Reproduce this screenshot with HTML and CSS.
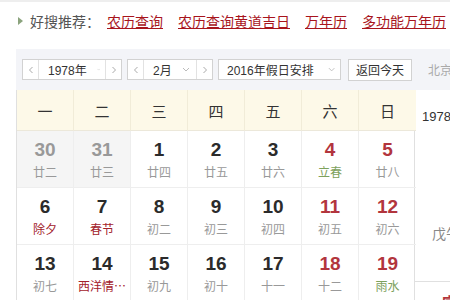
FILE: index.html
```html
<!DOCTYPE html>
<html lang="zh-CN">

<head>
    <meta charset="UTF-8">
    <title>万年历</title>
    <link rel="stylesheet" href="styles.css">
</head>

<body>
    <div class="top-line"></div>
    <div class="recommend">
        <span class="arrow"></span>
        <span class="label">好搜推荐：</span>
        <a href="#">农历查询</a>
        <a href="#">农历查询黄道吉日</a>
        <a href="#">万年历</a>
        <a href="#">多功能万年历</a>
    </div>

    <div class="calendar">
        <div class="toolbar">
            <div class="picker year">
                <span class="step"><svg width="6" height="8" viewBox="0 0 6 8"><polyline points="4.5,1 1.5,4 4.5,7" fill="none" stroke="#aaa" stroke-width="1"/></svg></span>
                <span class="value">1978年<svg class="down" width="8" height="5" viewBox="0 0 8 5"><polyline points="1,1 4,4 7,1" fill="none" stroke="#bbb" stroke-width="1"/></svg></span>
                <span class="step"><svg width="6" height="8" viewBox="0 0 6 8"><polyline points="1.5,1 4.5,4 1.5,7" fill="none" stroke="#aaa" stroke-width="1"/></svg></span>
            </div>
            <div class="picker month">
                <span class="step"><svg width="6" height="8" viewBox="0 0 6 8"><polyline points="4.5,1 1.5,4 4.5,7" fill="none" stroke="#aaa" stroke-width="1"/></svg></span>
                <span class="value">2月<svg class="down" width="8" height="5" viewBox="0 0 8 5"><polyline points="1,1 4,4 7,1" fill="none" stroke="#bbb" stroke-width="1"/></svg></span>
                <span class="step"><svg width="6" height="8" viewBox="0 0 6 8"><polyline points="1.5,1 4.5,4 1.5,7" fill="none" stroke="#aaa" stroke-width="1"/></svg></span>
            </div>
            <div class="picker holiday">
                <span class="value">2016年假日安排<svg class="down" width="8" height="5" viewBox="0 0 8 5"><polyline points="1,1 4,4 7,1" fill="none" stroke="#bbb" stroke-width="1"/></svg></span>
            </div>
            <div class="today-btn">返回今天</div>
            <div class="beijing">北京时间</div>
        </div>

        <div class="body">
            <div class="grid">
                <div class="head">一</div>
                <div class="head">二</div>
                <div class="head">三</div>
                <div class="head">四</div>
                <div class="head">五</div>
                <div class="head">六</div>
                <div class="head">日</div>

                <div class="day other"><b>30</b><span>廿二</span></div>
                <div class="day other"><b>31</b><span>廿三</span></div>
                <div class="day"><b>1</b><span>廿四</span></div>
                <div class="day"><b>2</b><span>廿五</span></div>
                <div class="day"><b>3</b><span>廿六</span></div>
                <div class="day weekend"><b>4</b><span class="term">立春</span></div>
                <div class="day weekend"><b>5</b><span>廿八</span></div>

                <div class="day"><b>6</b><span class="fest">除夕</span></div>
                <div class="day"><b>7</b><span class="fest">春节</span></div>
                <div class="day"><b>8</b><span>初二</span></div>
                <div class="day"><b>9</b><span>初三</span></div>
                <div class="day"><b>10</b><span>初四</span></div>
                <div class="day weekend"><b>11</b><span>初五</span></div>
                <div class="day weekend"><b>12</b><span>初六</span></div>

                <div class="day"><b>13</b><span>初七</span></div>
                <div class="day"><b>14</b><span class="fest">西洋情…</span></div>
                <div class="day"><b>15</b><span>初九</span></div>
                <div class="day"><b>16</b><span>初十</span></div>
                <div class="day"><b>17</b><span>十一</span></div>
                <div class="day weekend"><b>18</b><span>十二</span></div>
                <div class="day weekend"><b>19</b><span class="term">雨水</span></div>
            </div>

            <div class="side">
                <div class="side-date">1978年2月</div>
                <div class="side-lunar">戊午年</div>
                <div class="side-good">宜</div>
            </div>
        </div>
    </div>
</body>

</html>
```

FILE: styles.css
```css
body {
    margin: 0;
    font-family: "Liberation Sans", "Noto Sans CJK SC", sans-serif;
    background-color: #fff;
    width: 450px;
    height: 300px;
    overflow: hidden;
}

.top-line {
    height: 2px;
    background-color: #eeeeee;
}

.recommend {
    height: 36px;
    padding-top: 1px;
    padding-left: 18px;
    display: flex;
    align-items: center;
    white-space: nowrap;
    font-size: 14px;
    font-family: "Noto Sans CJK SC", sans-serif;
}

.arrow {
    width: 0;
    height: 0;
    border-top: 4px solid transparent;
    border-bottom: 4px solid transparent;
    border-left: 5px solid #8ba37d;
    margin-right: 7px;
}

.label {
    color: #555;
    margin-right: 7px;
}

.recommend a {
    color: #a8141c;
    text-decoration: underline;
    margin-right: 15px;
}

.calendar {
    margin-top: 10px;
    margin-left: 16px;
    width: 434px;
}

.toolbar {
    height: 41px;
    background-color: #f3f4f8;
    display: flex;
    align-items: center;
    padding-left: 6px;
    white-space: nowrap;
    font-size: 12px;
    color: #333;
}

.picker {
    display: flex;
    height: 21px;
    box-sizing: border-box;
    border: 1px solid #d2d2d2;
    background-color: #fff;
    margin-right: 5px;
}

.step {
    width: 15px;
    display: flex;
    align-items: center;
    justify-content: center;
}

.step:first-child {
    border-right: 1px solid #e2e2e2;
}

.step:last-child {
    border-left: 1px solid #e2e2e2;
}

.value {
    display: flex;
    align-items: center;
    padding-left: 9px;
    padding-right: 5px;
    font-family: "Liberation Sans", "Noto Sans CJK SC", sans-serif;
}

.down {
    margin-left: 10px;
}

.year .value {
    width: 52px;
}

.month .value {
    width: 38px;
}

.holiday {
    margin-right: 7px;
}

.holiday .value {
    width: 108px;
    padding-left: 8px;
}

.holiday .down {
    margin-left: 14px;
}

.today-btn {
    height: 22px;
    box-sizing: border-box;
    border: 1px solid #d2d2d2;
    background-color: #fff;
    padding: 0 7px;
    line-height: 20px;
    font-family: "Noto Sans CJK SC", sans-serif;
}

.beijing {
    margin-left: 16px;
    color: #aaa;
    font-family: "Noto Sans CJK SC", sans-serif;
}

.body {
    display: flex;
}

.grid {
    display: grid;
    grid-template-columns: repeat(7, 57px);
    grid-template-rows: 41px repeat(3, 57px);
    border-left: 1px solid #e0e0e0;
    border-right: 1px solid #e0e0e0;
    width: 399px;
    box-sizing: border-box;
    flex-shrink: 0;
}

.head {
    background-color: #fdf9e8;
    display: flex;
    align-items: center;
    justify-content: center;
    font-size: 15px;
    color: #333;
    font-family: "Noto Sans CJK SC", sans-serif;
    border-right: 1px solid #f1ecd8;
    border-bottom: 1px solid #ece8da;
}

.day {
    display: flex;
    flex-direction: column;
    align-items: center;
    border-right: 1px solid #eeeeee;
    border-bottom: 1px solid #eeeeee;
    box-sizing: border-box;
}

.grid > div:nth-child(7n) {
    border-right: none;
}

.day b {
    margin-top: 8px;
    font-size: 19px;
    line-height: 22px;
    color: #2b2b2b;
}

.day span {
    margin-top: 2px;
    font-size: 12px;
    line-height: 18px;
    color: #999;
    font-family: "Noto Sans CJK SC", sans-serif;
    white-space: nowrap;
}

.other {
    background-color: #f5f5f5;
}

.other b {
    color: #999;
}

.weekend b {
    color: #b2353d;
}

.day span.term {
    color: #7da15c;
}

.day span.fest {
    color: #a3222b;
}

.side {
    flex: 1;
    padding-left: 7px;
    white-space: nowrap;
    overflow: hidden;
}

.side-date {
    margin-top: 16px;
    font-size: 13px;
    color: #333;
}

.side-lunar {
    margin-top: 98px;
    padding-left: 10px;
    font-size: 14px;
    color: #888;
    font-family: "Noto Sans CJK SC", sans-serif;
}

.side-good {
    margin-top: 38px;
    margin-left: -7px;
    padding-left: 27px;
    padding-top: 9px;
    border-top: 1px solid #e0e0e0;
    font-size: 15px;
    font-weight: bold;
    color: #b2353d;
    font-family: "Noto Sans CJK SC", sans-serif;
}
```
